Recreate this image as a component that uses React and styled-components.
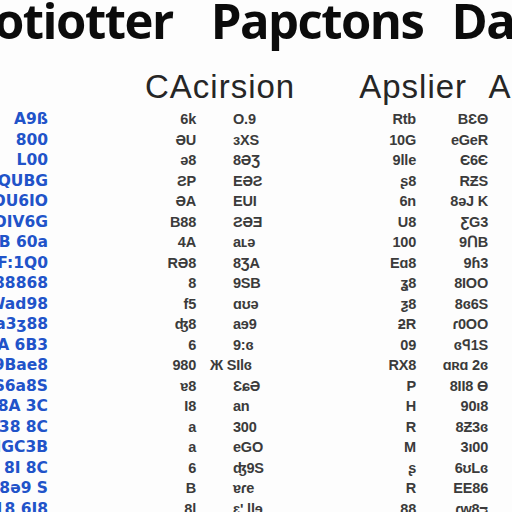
import React from "react";
import styled, { createGlobalStyle } from "styled-components";

const GlobalStyle = createGlobalStyle`
  html, body {
    margin: 0;
    padding: 0;
    background: #fdfdfd;
    overflow: hidden;
  }
`;

const Page = styled.div`
  width: 512px;
  height: 512px;
  overflow: hidden;
  background: #fdfdfd;
`;

const Title = styled.h1`
  display: flex;
  margin: -2px 0 0 -6px;
  font-family: "Open Sans", "DejaVu Sans", sans-serif;
  font-weight: 700;
  font-size: 49px;
  line-height: 45px;
  color: #0b0b0b;
  white-space: nowrap;
  letter-spacing: -1.5px;
`;

const TitleWord = styled.span`
  margin-right: ${(p) => p.$gap || 0}px;
`;

const SubHeader = styled.div`
  display: flex;
  gap: 64px;
  margin-top: 27px;
  padding-left: 145px;
  font-family: "Liberation Sans", Arial, sans-serif;
  font-size: 33px;
  line-height: 34px;
  color: #262626;
  white-space: nowrap;
  letter-spacing: 1px;
  word-spacing: 13px;
`;

const Table = styled.div`
  display: grid;
  grid-template-columns: 48px 148px 120px 100px 72px 24px;
  grid-auto-rows: 20.5px;
  margin-top: 5px;
`;

const Cell = styled.div`
  display: flex;
  justify-content: ${(p) => (p.$right ? "flex-end" : "flex-start")};
  padding-left: ${(p) => p.$pad || 0}px;
  white-space: nowrap;
  font-family: ${(p) =>
    p.$blue ? '"DejaVu Sans", sans-serif' : '"Liberation Sans", Arial, sans-serif'};
  font-weight: 700;
  font-size: ${(p) => (p.$blue ? "15.5px" : "14.5px")};
  line-height: 20.5px;
  color: ${(p) => (p.$blue ? "#2153c9" : "#3b3b3b")};
  letter-spacing: ${(p) => (p.$blue ? "0px" : "-0.2px")};
`;

const rows = [
  ["A9ß", "6k", "O.9", "Rtb", "BƐΘ"],
  ["800", "ƏU", "ɜXS", "10G", "eGeR"],
  ["L00", "ə8", "8ƏƷ", "9lle", "Є6Є"],
  ["QUBG", "ƧP", "EƏƧ", "ʂ8", "RƵS"],
  ["OU6IO", "ƏA", "EUI", "6n", "8əJ K"],
  ["OIV6G", "B88", "ƧƏƎ", "U8", "ƸG3"],
  ["8B 60a", "4A", "aʟə", "100", "9ՈB"],
  ["8F:1Q0", "RƏ8", "8ƷA", "Eɑ8", "9ɦ3"],
  ["188868", "8", "9SB", "ʓ8", "8IOO"],
  ["Wad98", "f5", "ɑʊə", "ƺ8", "8ɞ6S"],
  ["Ia3ʒ88", "ʤ8", "aɘ9", "ƻR", "ɾ0OO"],
  ["8A 6B3", "6", "9:ɞ", "09", "ɞꟼ1S"],
  ["9Bae8", "980", "Ж SIlɞ", "RX8", "ɑʀɑ 2ɞ", -23],
  ["S6a8S", "ɐ8", "ƐɕƏ", "P", "8II8 Ɵ"],
  ["L8A 3C", "I8", "an", "H", "90ı8"],
  ["38 8C", "a", "300", "R", "8Ƶ3ɞ"],
  ["HGC3B", "a", "eGO", "M", "3ı00"],
  ["8I 8C", "6", "ʤ9S", "ʂ", "6ʊLɞ"],
  ["L8ə9 S", "B", "ɐɾe", "R", "EE86"],
  ["18 6I8", "8l", "ɛ' llɘ", "88", "ɾw8ᴝ"],
];

export default function App() {
  return (
    <Page>
      <GlobalStyle />
      <Title>
        <TitleWord $gap={38}>otiotter</TitleWord>
        <TitleWord $gap={28}>Papctons</TitleWord>
        <TitleWord>Da</TitleWord>
      </Title>
      <SubHeader>
        <span>CAcirsion</span>
        <span>Apslier A</span>
      </SubHeader>
      <Table>
        {rows.map(([a, b, c, d, e, shift], i) => (
          <React.Fragment key={i}>
            <Cell $blue $right>{a}</Cell>
            <Cell $right>{b}</Cell>
            <Cell $pad={37 + (shift || 0)}>{c}</Cell>
            <Cell $right>{d}</Cell>
            <Cell $right>{e}</Cell>
            <Cell />
          </React.Fragment>
        ))}
      </Table>
    </Page>
  );
}
